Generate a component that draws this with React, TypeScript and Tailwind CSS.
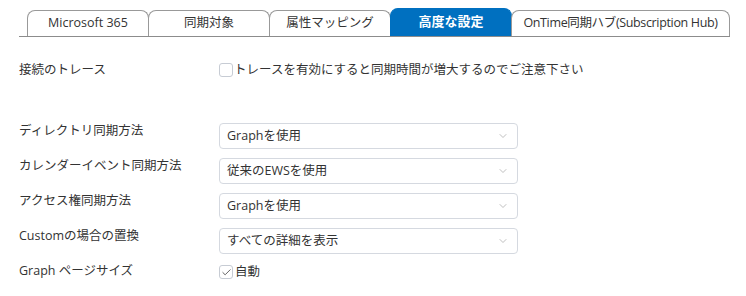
import React from 'react';
import { ChevronDown, Check } from 'lucide-react';

const tabs = [
  { label: 'Microsoft 365', w: 'w-[122px]' },
  { label: '同期対象', w: 'w-[122px]' },
  { label: '属性マッピング', w: 'w-[122px]' },
  { label: '高度な設定', w: 'w-[122px]', active: true },
  { label: 'OnTime同期ハブ(Subscription Hub)', w: 'w-[219px] tracking-[-0.35px]' },
];

const selects = [
  { label: 'ディレクトリ同期方法', value: 'Graphを使用' },
  { label: 'カレンダーイベント同期方法', value: '従来のEWSを使用' },
  { label: 'アクセス権同期方法', value: 'Graphを使用' },
  { label: 'Customの場合の置換', value: 'すべての詳細を表示' },
];

const Select = ({ value }: { value: string }) => (
  <div className="w-[299px] h-[26px] border border-[#d5d9e0] rounded-[4px] bg-white flex items-center justify-between pl-[7px] pr-[8px] text-[12.5px] text-[#333]">
    <span>{value}</span>
    <ChevronDown size={12} strokeWidth={1.5} className="text-[#aaa]" />
  </div>
);

export default function App() {
  return (
    <div className="w-[746px] h-[296px] bg-white pl-[19px] pt-[9px] text-[#333]" style={{ fontFamily: '"Open Sans", "Noto Sans CJK JP", sans-serif' }}>
      <div className="w-[711px] h-[28px] flex items-end pl-[8px] border-b border-[#8c8c8c]">
        {tabs.map(t => (
          <div
            key={t.label}
            className={
              t.active
                ? `${t.w} h-[28px] -ml-px first:ml-0 rounded-t-[8px] bg-[#0070c0] border border-b-0 border-[#0070c0] text-white font-semibold text-[13px] flex items-center justify-center pb-[2px]`
                : `${t.w} h-[26px] -ml-px first:ml-0 rounded-t-[8px] bg-white border border-b-0 border-[#999] text-[12.5px] flex items-center justify-center`
            }
          >
            {t.label}
          </div>
        ))}
      </div>

      <div className="flex items-center mt-[23px] h-[20px] text-[12.5px]">
        <div className="w-[200px]">接続のトレース</div>
        <div className="flex items-center gap-[1px]">
          <span className="w-[14px] h-[14px] border border-[#c7ccd4] rounded-[3px] bg-white" />
          <span>トレースを有効にすると同期時間が増大するのでご注意下さい</span>
        </div>
      </div>

      <div className="mt-[43px] flex flex-col gap-[9px]">
        {selects.map(s => (
          <div key={s.label} className="flex items-start h-[26px] text-[12.5px]">
            <div className="w-[200px] -mt-[1px]">{s.label}</div>
            <Select value={s.value} />
          </div>
        ))}
      </div>

      <div className="flex items-center mt-[7px] h-[20px] text-[12.5px]">
        <div className="w-[200px]">Graph ページサイズ</div>
        <div className="flex items-center gap-[2px] mt-[2px]">
          <span className="w-[14px] h-[14px] border border-[#c7ccd4] rounded-[3px] bg-white flex items-center justify-center">
            <Check size={11} strokeWidth={2} className="text-[#555]" />
          </span>
          <span>自動</span>
        </div>
      </div>
    </div>
  );
}
